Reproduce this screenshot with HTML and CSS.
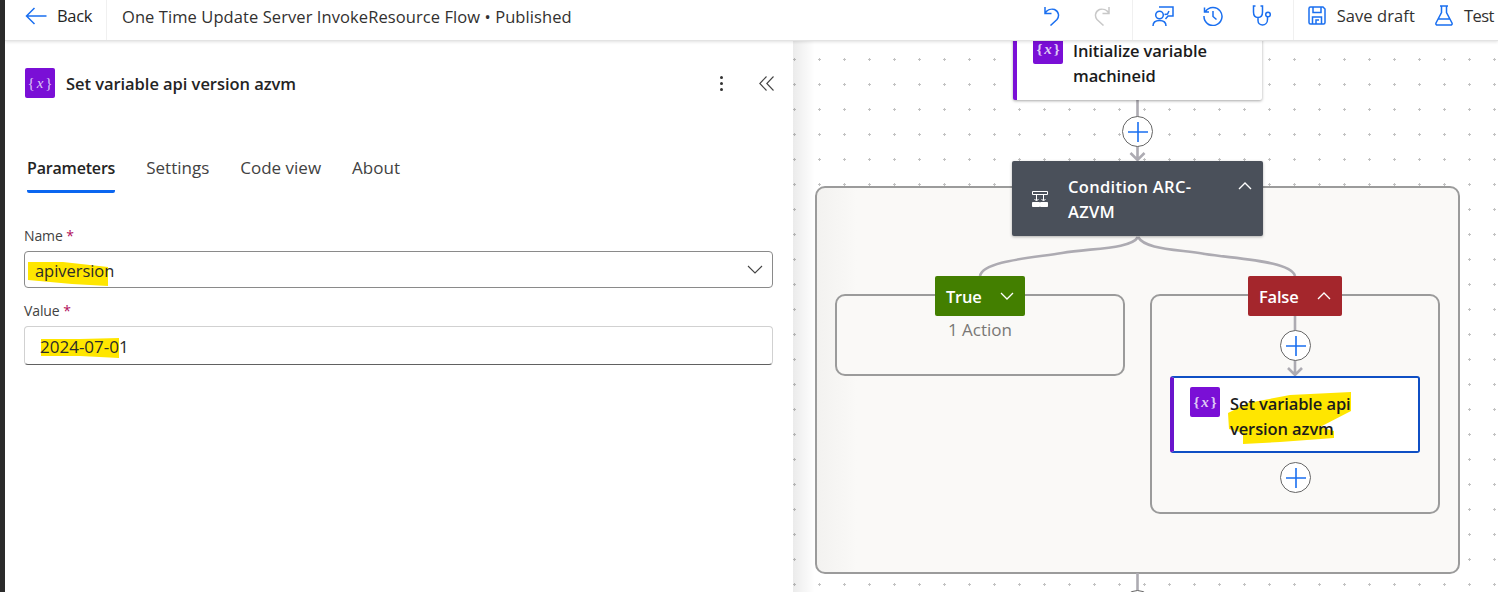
FILE: index.html
```html
<!DOCTYPE html>
<html lang="en">
<head>
<meta charset="utf-8">
<title>One Time Update Server InvokeResource Flow</title>
<link rel="stylesheet" href="styles.css">
</head>
<body>
<div class="app">
  <div class="strip"></div>
  <div class="shell">
    <header class="topbar">
      <div class="back">
        <svg class="ico-back" width="22" height="18" viewBox="0 0 22 18"><path d="M9.500 1 1.500 9l8 8M1.500 9H21.500"/></svg>
        <span>Back</span>
      </div>
      <div class="flow-title">One Time Update Server InvokeResource Flow • Published</div>
      <div class="tools">
        <div class="tool-group">
          <span class="tool"><svg width="16" height="20" viewBox="0 0 16 20"><path d="M1 1v6.500h6.500M1 7.500C3 4 7 2.500 10.500 3.500 15 5.500 15.500 10.500 13 13.500L6.500 19.500"/></svg></span>
          <span class="tool tool-off"><svg width="16" height="20" viewBox="0 0 16 20"><path d="M15 1v6.500H8.500M15 7.500C13 4 9 2.500 5.500 3.500 1 5.500 .5 10.500 3 13.500L9.500 19.500"/></svg></span>
        </div>
        <div class="tool-group">
          <span class="tool"><svg width="22" height="20" viewBox="0 0 22 20"><circle cx="7.500" cy="9" r="3.800"/><path d="M1 20c0-3.500 2.500-5.500 6.500-5.500S14 16.500 14 20M7 1h14v9h-5l-2.500 3M12.500 8.500l3-.5 1.500-3"/></svg></span>
          <span class="tool"><svg width="20" height="20" viewBox="0 0 20 20"><path d="M2.500 5.500A9 9 0 1 1 1 10M1.500 1.500V6H6M10 5v5.500l3.500 3"/></svg></span>
          <span class="tool"><svg width="21" height="21" viewBox="0 0 21 21"><path d="M3.500 1H1.500v6c0 3.500 2 5.500 4.500 5.500S10.500 10.500 10.500 7V1H8.500M6 12.500v3c0 2.700 2 4.500 4.500 4.500s5-2 5-5.500V12"/><circle cx="16" cy="9.500" r="2.300"/></svg></span>
        </div>
        <div class="action">
          <svg width="18" height="19" viewBox="0 0 18 19"><path d="M1 2.500C1 1.500 1.500 1 2.500 1H15l2 2v13.500c0 1-.5 1.500-1.500 1.500h-13C1.500 18 1 17.500 1 16.500zM5 1v5.500h8V1M4.500 18v-7h9v7M8 18v-4h3"/></svg>
          <span>Save draft</span>
        </div>
        <div class="action action-test">
          <svg width="18" height="21" viewBox="0 0 18 21"><path d="M5 1h8M6.500 1v6.500L1 18c-.4 1.200.2 2 1.500 2h13c1.300 0 1.900-.8 1.500-2L11.500 7.500V1M3.500 14h11"/></svg>
          <span>Test</span>
        </div>
      </div>
    </header>

    <main class="workspace">
      <section class="panel">
        <div class="panel-head">
          <span class="var-icon var-icon-lg"><i>{</i><em>x</em><i>}</i></span>
          <h1>Set variable api version azvm</h1>
          <span class="kebab"><b></b><b></b><b></b></span>
          <svg class="collapse" width="15" height="15" viewBox="0 0 15 15"><path d="M7.500 .5 .8 7.500l6.700 7M14.500 .5 7.800 7.500l6.700 7"/></svg>
        </div>
        <nav class="tabs">
          <span class="tab tab-on">Parameters</span>
          <span class="tab">Settings</span>
          <span class="tab">Code view</span>
          <span class="tab">About</span>
        </nav>
        <div class="field">
          <label>Name <span class="req">*</span></label>
          <div class="input input-select">
            <svg class="mark mark-name" width="82" height="28" viewBox="0 0 82 28"><path d="M1 2 36 2 81 7V26L45 24 1 20Z"/></svg>
            <span class="val">apiversion</span>
            <svg class="caret" width="16" height="9" viewBox="0 0 16 9"><path d="M1 1l7 7 7-7"/></svg>
          </div>
        </div>
        <div class="field field-value">
          <label>Value <span class="req">*</span></label>
          <div class="input input-text">
            <svg class="mark mark-value" width="80" height="22" viewBox="0 0 80 22"><path d="M1 2 40 2 79 1V21L40 19 1 19Z"/></svg>
            <span class="val val-date">2024-07-01</span>
          </div>
        </div>
      </section>

      <section class="canvas">
        <svg class="wires" width="705" height="551" viewBox="0 0 705 551">
          <path d="M344.500 59V119M337.500 112l7 7 7-7"/>
          <path d="M345 196C338 208 300 207 269 212S190 220 187 235"/>
          <path d="M345 196C352 208 380 208 412 213S498 220 502 235"/>
          <path d="M502 275V334M495 327l7 7 7-7"/>
          <path d="M344.500 532V551"/>
        </svg>

        <div class="group group-outer"></div>

        <div class="card card-init">
          <span class="var-icon"><i>{</i><em>x</em><i>}</i></span>
          <span class="card-text">Initialize variable machineid</span>
        </div>

        <div class="plus plus-a"><svg width="22" height="22" viewBox="0 0 22 22"><path d="M11 1v20M1 11h20"/></svg></div>

        <div class="condition">
          <svg width="16" height="16" viewBox="0 0 16 16"><path d="M.5 .5h15v3H.5zM4.500 3.500v6M11.500 3.500v6M2.500 8l2 2 2-2M9.500 8l2 2 2-2"/><path class="solid" d="M.5 11.500h7v4h-7zM8.500 11.500h7v4h-7z"/></svg>
          <span>Condition ARC-AZVM</span>
          <svg class="cond-caret" width="14" height="8" viewBox="0 0 14 8"><path d="M1 7l6-6 6 6"/></svg>
        </div>

        <div class="group group-true"></div>
        <div class="branch branch-true">
          <span>True</span>
          <svg width="14" height="8" viewBox="0 0 14 8"><path d="M1 1l6 6 6-6"/></svg>
        </div>
        <div class="collapsed-note">1 Action</div>

        <div class="group group-false"></div>
        <div class="branch branch-false">
          <span>False</span>
          <svg width="14" height="8" viewBox="0 0 14 8"><path d="M1 7l6-6 6 6"/></svg>
        </div>

        <div class="plus plus-b"><svg width="22" height="22" viewBox="0 0 22 22"><path d="M11 1v20M1 11h20"/></svg></div>

        <div class="card card-selected">
          <svg class="mark mark-card" width="128" height="56" viewBox="0 0 128 56"><path d="M2 23 22 13 64 5 125 2V21L94 37 108 41V48L54 52 17 54V43L3 39Z"/></svg>
          <span class="var-icon"><i>{</i><em>x</em><i>}</i></span>
          <span class="card-text">Set variable api version azvm</span>
        </div>

        <div class="plus plus-c"><svg width="22" height="22" viewBox="0 0 22 22"><path d="M11 1v20M1 11h20"/></svg></div>
        <div class="plus plus-d"></div>
      </section>
    </main>
  </div>
</div>
</body>
</html>
```

FILE: styles.css
```css
* { box-sizing: border-box; }
html, body { margin: 0; height: 100%; overflow: hidden; }
body {
  font-family: "Open Sans", "Noto Sans", sans-serif;
  color: #242424;
  background: #fff;
}
.app { display: flex; width: 1498px; height: 592px; }
.strip { width: 5px; flex: none; background: #2b2b2b; }
.shell { flex: 1; display: flex; flex-direction: column; min-width: 0; }

.topbar {
  flex: none;
  height: 41px;
  display: flex;
  align-items: stretch;
  background: #fff;
  border-bottom: 1px solid #e3e3e3;
  box-shadow: 0 1px 3px rgba(0,0,0,.12);
  position: relative;
  z-index: 5;
  font-size: 16.500px;
  letter-spacing: .08px;
  white-space: nowrap;
}
.topbar svg, .plus svg { fill: none; stroke: #1a6ff0; stroke-width: 1.500; }
.back {
  width: 102px;
  display: flex;
  align-items: center;
  gap: 10px;
  padding: 0 0 9px 20px;
  border-right: 1px solid #f0f0f0;
}
.back span { letter-spacing: -.3px; }
.flow-title { padding: 6px 0 0 15px; color: #323130; line-height: 22px; }
.tools { margin-left: auto; display: flex; align-items: stretch; }
.tool-group { display: flex; align-items: center; padding: 0 5px 9px; border-right: 1px solid #f0f0f0; }
.tool { width: 50px; display: flex; justify-content: center; }
.topbar .tool-off svg { stroke: #c8c8c8; }
.action { display: flex; align-items: center; gap: 11px; color: #323130; padding-bottom: 9px; }
.tool-group + .action { margin-left: 14px; }
.action-test { margin-left: 20px; margin-right: 4px; letter-spacing: -.5px; }

.workspace { flex: 1; display: flex; min-height: 0; }
.panel { width: 788px; flex: none; background: #fff; padding: 27px 20px 0 19px; position: relative; z-index: 2; }
.panel-head { display: flex; align-items: center; height: 30px; padding-left: 1px; }
.panel-head h1 { margin: 0 0 0 11px; font-size: 16.500px; font-weight: 600; letter-spacing: -.05px; flex: 1; white-space: nowrap; }
.kebab { display: flex; flex-direction: column; gap: 3px; margin-right: 36px; }
.kebab b { width: 3px; height: 3px; border-radius: 50%; background: #333; }
.collapse { fill: none; stroke: #444; stroke-width: 1.100; margin-right: -1px; }

.var-icon {
  width: 30px;
  height: 30px;
  flex: none;
  border-radius: 2px;
  background: #7a0fd6;
  color: #ddc8f5;
  display: flex;
  align-items: center;
  justify-content: center;
  font-family: "Liberation Serif", serif;
  font-size: 15px;
  line-height: 1;
  position: relative;
  z-index: 1;
}
.var-icon i { font-style: normal; }
.var-icon em { margin: 0 2px; }

.tabs { display: flex; gap: 31px; margin: 55px 0 0 3px; font-size: 17px; color: #424242; }
.tab { height: 40px; line-height: 30px; white-space: nowrap; }
.tab-on { font-size: 16px; letter-spacing: -.18px; font-weight: 600; color: #242424; border-bottom: 3px solid #0b66f0; border-radius: 0 0 2px 2px; }

.field { margin-top: 33px; }
.field-value { margin-top: 13px; }
.field label { display: block; font-size: 14px; line-height: 19px; color: #424242; letter-spacing: -.1px; }
.req { color: #b10e5c; }
.input {
  height: 37px;
  margin-top: 6px;
  display: flex;
  align-items: center;
  justify-content: space-between;
  border: 1px solid #8a8a8a;
  border-radius: 4px;
  position: relative;
  font-size: 16.500px;
  letter-spacing: -.05px;
  color: #2b2b2b;
}
.input-text { height: 39px; border-color: #d1d1d1; border-bottom-color: #616161; margin-top: 6px; }
.val { position: relative; z-index: 1; padding: 2px 0 0 10px; }
.val-date { padding: 1px 0 0 15px; font-size: 17px; letter-spacing: 0; }
.mark { position: absolute; fill: #ffe600; }
.mark-name { left: 2px; top: 8px; }
.mark-value { left: 15px; top: 10px; }
.caret { fill: none; stroke: #444; stroke-width: 1.100; margin-right: 9px; }

.canvas {
  flex: 1;
  position: relative;
  overflow: hidden;
  background-color: #fff;
  background-image:
    linear-gradient(90deg, rgba(0,0,0,.08), rgba(0,0,0,0) 22px),
    radial-gradient(circle, #c2c2c2 1px, rgba(0,0,0,0) 1.200px);
  background-size: 100% 100%, 25px 25px;
  background-position: 0 0, -11px 6px;
}
.wires { position: absolute; left: 0; top: 0; z-index: 2; fill: none; stroke: #adabb2; stroke-width: 2.600; }

.group { position: absolute; background: #faf9f7; border: 2px solid #9b9b9b; border-radius: 10px; }
.group-outer { left: 22px; top: 145px; width: 645px; height: 388px; background: linear-gradient(90deg, #f3f2f0, #faf9f7 40px); }
.group-true { left: 42px; top: 253px; width: 290px; height: 82px; z-index: 1; }
.group-false { left: 357px; top: 253px; width: 290px; height: 220px; z-index: 1; }

.card {
  position: absolute;
  background: #fff;
  display: flex;
  align-items: flex-start;
  z-index: 3;
  font-size: 16.500px;
  font-weight: 600;
  line-height: 25px;
  letter-spacing: -.1px;
  color: #1b1b1b;
}
.card-init {
  left: 220px; top: -20px; width: 249px; height: 79px;
  border-left: 4px solid #7a0fd6;
  border-radius: 2px;
  box-shadow: 0 1px 3px rgba(0,0,0,.35);
  padding: 13px 20px 0 16px;
}
.card-init .card-text { margin: 4px 0 0 10px; width: 170px; }
.card-selected {
  left: 377px; top: 335px; width: 250px; height: 77px;
  border: 2px solid #0f4fc4;
  border-left: 4px solid #6a14cc;
  border-radius: 3px;
  padding: 9px 20px 0 16px;
}
.card-selected .card-text { margin: 4px 0 0 10px; width: 150px; position: relative; z-index: 1; }
.mark-card { left: 52px; top: 12px; }

.plus {
  position: absolute;
  width: 31px;
  height: 31px;
  border: 1px solid #666;
  border-radius: 50%;
  background: #fff;
  display: flex;
  align-items: center;
  justify-content: center;
  z-index: 4;
}
.plus svg { stroke-width: 1.600; }
.plus-a { left: 329px; top: 75px; }
.plus-b { left: 487px; top: 289px; }
.plus-c { left: 487px; top: 421px; }
.plus-d { left: 329px; top: 549px; }

.condition {
  position: absolute;
  left: 219px; top: 120px;
  width: 251px; height: 75px;
  background: #4a505a;
  border-radius: 2px;
  box-shadow: 0 1px 3px rgba(0,0,0,.3);
  color: #fff;
  display: flex;
  align-items: center;
  z-index: 3;
  padding-left: 20px;
  font-size: 16.500px;
  font-weight: 600;
  line-height: 25px;
  letter-spacing: .3px;
}
.condition svg { fill: none; stroke: #fff; stroke-width: 1; flex: none; }
.condition .solid { fill: #fff; }
.condition span { width: 145px; margin-left: 20px; }
.condition .cond-caret { position: absolute; right: 11px; top: 21px; stroke-width: 1.400; }

.branch {
  position: absolute;
  top: 235px;
  height: 40px;
  border-radius: 2px;
  color: #fff;
  display: flex;
  align-items: center;
  justify-content: space-between;
  z-index: 3;
  font-size: 16.500px;
  font-weight: 600;
  letter-spacing: -.2px;
}
.branch svg { fill: none; stroke: #fff; stroke-width: 1.300; }
.branch-true { left: 142px; width: 90px; background: #437f00; padding: 0 11px; }
.branch-false { left: 455px; width: 94px; background: #a4262c; padding: 0 11px; }
.collapsed-note {
  position: absolute;
  left: 42px; top: 278px;
  width: 290px;
  text-align: center;
  font-size: 17px;
  line-height: 22px;
  color: #797775;
  z-index: 3;
}
```
